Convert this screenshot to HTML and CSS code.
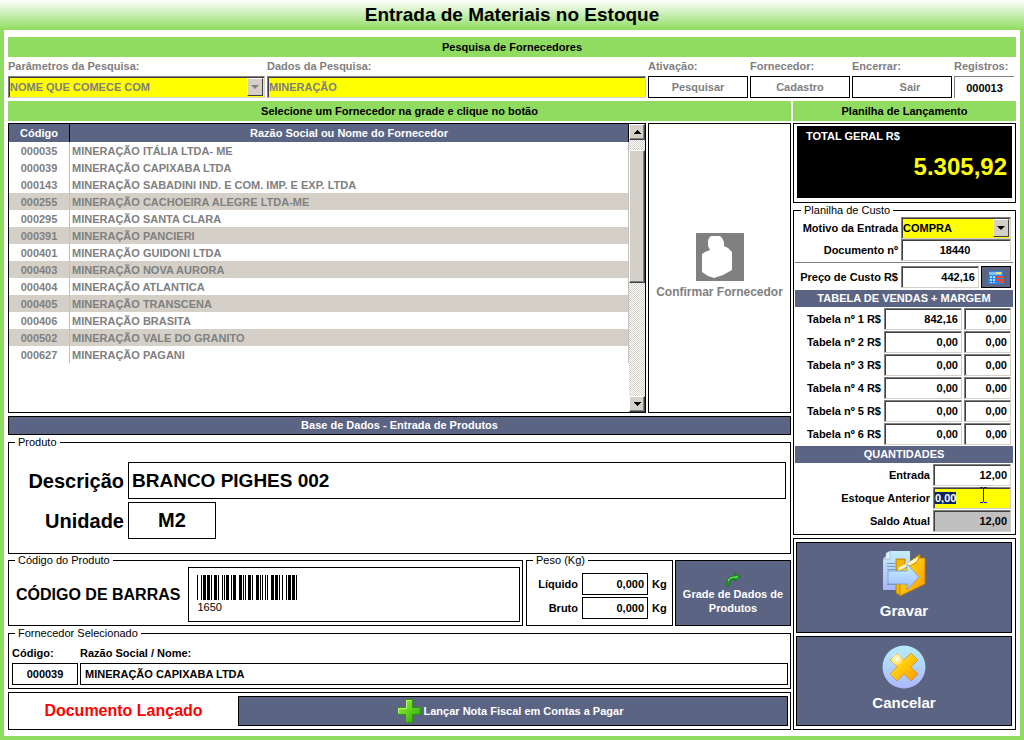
FILE: index.html
```html
<!DOCTYPE html>
<html lang="pt-BR">
<head>
<meta charset="utf-8">
<title>Entrada de Materiais no Estoque</title>
<link rel="stylesheet" href="styles.css">
</head>
<body>
<div class="window">
  <h1 class="title">Entrada de Materiais no Estoque</h1>
  <main class="content">
    <h2 class="bar">Pesquisa de Fornecedores</h2>
    <div class="search">
      <div class="search-cell">
        <label for="param">Parâmetros da Pesquisa:</label>
        <span class="combo combo-off">
          <select id="param" class="sunken yellow" disabled><option>NOME QUE COMECE COM</option></select>
          <span class="combo-arrow"></span>
        </span>
      </div>
      <div class="search-cell">
        <label for="dados">Dados da Pesquisa:</label>
        <input id="dados" class="sunken yellow" type="text" value="MINERAÇÃO" disabled>
      </div>
      <div class="search-cell">
        <label for="pesquisar">Ativação:</label>
        <button id="pesquisar" class="flat" disabled>Pesquisar</button>
      </div>
      <div class="search-cell">
        <label for="cadastro">Fornecedor:</label>
        <button id="cadastro" class="flat" disabled>Cadastro</button>
      </div>
      <div class="search-cell">
        <label for="sair">Encerrar:</label>
        <button id="sair" class="flat flat-exit" disabled>Sair</button>
      </div>
      <div class="search-cell">
        <label for="registros">Registros:</label>
        <input id="registros" class="count" type="text" value="000013" readonly>
      </div>
    </div>

    <div class="columns">
      <section class="left">
        <h2 class="bar">Selecione um Fornecedor na grade e clique no botão</h2>
        <div class="picker">
          <div class="grid-box">
            <div class="grid-view">
              <table class="grid">
                <thead><tr><th class="code">Código</th><th>Razão Social ou Nome do Fornecedor</th></tr></thead>
                <tbody>
                  <tr><td>000035</td><td>MINERAÇÃO ITÁLIA LTDA- ME</td></tr>
                  <tr><td>000039</td><td>MINERAÇÃO CAPIXABA LTDA</td></tr>
                  <tr><td>000143</td><td>MINERAÇÃO SABADINI IND. E COM. IMP. E EXP. LTDA</td></tr>
                  <tr class="alt"><td>000255</td><td>MINERAÇÃO CACHOEIRA ALEGRE LTDA-ME</td></tr>
                  <tr><td>000295</td><td>MINERAÇÃO SANTA CLARA</td></tr>
                  <tr class="alt"><td>000391</td><td>MINERAÇÃO PANCIERI</td></tr>
                  <tr><td>000401</td><td>MINERAÇÃO GUIDONI LTDA</td></tr>
                  <tr class="alt"><td>000403</td><td>MINERAÇÃO NOVA AURORA</td></tr>
                  <tr><td>000404</td><td>MINERAÇÃO ATLANTICA</td></tr>
                  <tr class="alt"><td>000405</td><td>MINERAÇÃO TRANSCENA</td></tr>
                  <tr><td>000406</td><td>MINERAÇÃO BRASITA</td></tr>
                  <tr class="alt"><td>000502</td><td>MINERAÇÃO VALE DO GRANITO</td></tr>
                  <tr><td>000627</td><td>MINERAÇÃO PAGANI</td></tr>
                </tbody>
              </table>
            </div>
            <div class="scroll">
              <button class="scroll-btn" aria-label="Rolar para cima"><svg width="7" height="4" viewBox="0 0 7 4" shape-rendering="crispEdges"><path d="M3 0h1v1h1v1h1v1h1v1H0V3h1V2h1V1h1z"/></svg></button>
              <div class="scroll-track"><div class="scroll-thumb"></div></div>
              <button class="scroll-btn" aria-label="Rolar para baixo"><svg width="7" height="4" viewBox="0 0 7 4" shape-rendering="crispEdges"><path d="M0 0h7v1H6v1H5v1H4v1H3V3H2V2H1V1H0z"/></svg></button>
            </div>
          </div>
          <button class="confirm" disabled>
            <svg width="48" height="48" viewBox="0 0 48 48"><path fill="#808080" d="M0 0h48v48H0z"/><path fill="#fff" d="M15 3h9l2 2 2 4v4l4 2 4 4v18l-9 5-9 3-6-2-6-4V21l3-2 5-2-1-2-1-2V8l1-3z"/></svg>
            <span>Confirmar Fornecedor</span>
          </button>
        </div>

        <h2 class="slate-bar base">Base de Dados - Entrada de Produtos</h2>

        <fieldset class="group product">
          <legend>Produto</legend>
          <label for="desc">Descrição</label>
          <input id="desc" class="line-box desc" type="text" value="BRANCO PIGHES 002">
          <label for="unid">Unidade</label>
          <input id="unid" class="line-box unit" type="text" value="M2">
        </fieldset>

        <div class="code-row">
          <fieldset class="group barcode">
            <legend>Código do Produto</legend>
            <span class="barcode-label">CÓDIGO DE BARRAS</span>
            <div class="barcode-box">
              <svg width="100" height="25" viewBox="0 0 100 25" shape-rendering="crispEdges"><path d="M0 0h1v25h-1zM4 0h1v25h-1zM6 0h3v25h-3zM10 0h3v25h-3zM14 0h1v25h-1zM17 0h3v25h-3zM21 0h1v25h-1zM25 0h1v25h-1zM27 0h1v25h-1zM29 0h3v25h-3zM34 0h1v25h-1zM36 0h3v25h-3zM42 0h3v25h-3zM46 0h1v25h-1zM48 0h1v25h-1zM51 0h3v25h-3zM55 0h1v25h-1zM59 0h3v25h-3zM63 0h1v25h-1zM65 0h1v25h-1zM68 0h1v25h-1zM70 0h1v25h-1zM74 0h3v25h-3zM78 0h3v25h-3zM82 0h1v25h-1zM85 0h1v25h-1zM89 0h1v25h-1zM91 0h3v25h-3zM95 0h3v25h-3zM99 0h1v25h-1z"/></svg>
              <span>1650</span>
            </div>
          </fieldset>
          <fieldset class="group weight">
            <legend>Peso (Kg)</legend>
            <label for="liq">Líquido</label><input id="liq" class="line-box" type="text" value="0,000"><span>Kg</span>
            <label for="bruto">Bruto</label><input id="bruto" class="line-box" type="text" value="0,000"><span>Kg</span>
          </fieldset>
          <button class="slate products">
            <svg width="15" height="15" viewBox="0 0 15 15"><path fill="#22b422" stroke="#0a6a0c" stroke-width=".8" d="M1 14C0 8 3 4 9 4V1l5 4-5 4V7C5 7 3 9 3 14z"/><path fill="none" stroke="#7fe86a" d="M2 9c1-3 3-4 7-4h3"/></svg>
            <span>Grade de Dados de Produtos</span>
          </button>
        </div>

        <fieldset class="group supplier">
          <legend>Fornecedor Selecionado</legend>
          <label for="fcod">Código:</label>
          <label for="fnome">Razão Social / Nome:</label>
          <input id="fcod" class="line-box center" type="text" value="000039">
          <input id="fnome" class="line-box" type="text" value="MINERAÇÃO CAPIXABA LTDA">
        </fieldset>

        <div class="status">
          <strong>Documento Lançado</strong>
          <button class="slate">
            <svg width="24" height="24" viewBox="0 0 24 24"><defs><linearGradient id="plus" x2="1" y2="1"><stop stop-color="#a4ee48"/><stop offset=".5" stop-color="#62d020"/><stop offset="1" stop-color="#2e9c08"/></linearGradient></defs><path fill="url(#plus)" stroke="#2a9410" d="M8.500.5h7v8h8v7h-8v8h-7v-8h-8v-7h8z"/><path fill="none" stroke="#b8f56c" d="M1.500 14V9.500h8v-8H14"/></svg>
            <span>Lançar Nota Fiscal em Contas a Pagar</span>
          </button>
        </div>
      </section>

      <section class="right">
        <h2 class="bar">Planilha de Lançamento</h2>
        <div class="total"><div class="total-in"><span>TOTAL GERAL R$</span><output>5.305,92</output></div></div>

        <fieldset class="group cost">
          <legend>Planilha de Custo</legend>
          <div class="field head"><label for="motivo">Motivo da Entrada</label>
            <span class="combo w-l"><select id="motivo" class="sunken yellow"><option>COMPRA</option></select><span class="combo-arrow"></span></span></div>
          <div class="field head"><label for="doc">Documento nº</label><input id="doc" class="sunken w-l center" type="text" value="18440"></div>
          <div class="field price"><label for="preco">Preço de Custo R$</label><input id="preco" class="sunken w-m num" type="text" value="442,16">
            <button class="slate calc" aria-label="Calculadora"><svg width="16" height="13" viewBox="0 0 16 13" shape-rendering="crispEdges"><path fill="#2f86e0" d="M1 0h14l1 13H0z"/><path fill="#7cc0f6" d="M1 1h13v3H1z"/><path fill="#e8e070" d="M8 1h5v2H8z"/><path fill="#a9dcff" d="M2 5h2v2H2zM5 5h2v2H5zM2 8h2v2H2zM5 8h2v2H5zM2 11h2v1H2zM5 11h2v1H5z"/><path fill="#e04a3c" d="M8 5h3v2H8zM12 5h3v2h-3zM8 8h3v2H8zM12 8h3v4h-3z"/></svg></button></div>
          <h3 class="slate-bar">TABELA DE VENDAS + MARGEM</h3>
          <div class="field"><label for="t1">Tabela nº 1 R$</label><input id="t1" class="sunken w-m num" type="text" value="842,16"><input aria-label="Margem 1" class="sunken w-s num" type="text" value="0,00"></div>
          <div class="field"><label for="t2">Tabela nº 2 R$</label><input id="t2" class="sunken w-m num" type="text" value="0,00"><input aria-label="Margem 2" class="sunken w-s num" type="text" value="0,00"></div>
          <div class="field"><label for="t3">Tabela nº 3 R$</label><input id="t3" class="sunken w-m num" type="text" value="0,00"><input aria-label="Margem 3" class="sunken w-s num" type="text" value="0,00"></div>
          <div class="field"><label for="t4">Tabela nº 4 R$</label><input id="t4" class="sunken w-m num" type="text" value="0,00"><input aria-label="Margem 4" class="sunken w-s num" type="text" value="0,00"></div>
          <div class="field"><label for="t5">Tabela nº 5 R$</label><input id="t5" class="sunken w-m num" type="text" value="0,00"><input aria-label="Margem 5" class="sunken w-s num" type="text" value="0,00"></div>
          <div class="field"><label for="t6">Tabela nº 6 R$</label><input id="t6" class="sunken w-m num" type="text" value="0,00"><input aria-label="Margem 6" class="sunken w-s num" type="text" value="0,00"></div>
          <h3 class="slate-bar">QUANTIDADES</h3>
          <div class="field"><label for="ent">Entrada</label><input id="ent" class="sunken w-m num" type="text" value="12,00"></div>
          <div class="field"><label for="ant">Estoque Anterior</label><span class="edit w-m"><input id="ant" class="sunken yellow" type="text" value="0,00">
            <svg class="ibeam" width="7" height="16" viewBox="0 0 7 16" shape-rendering="crispEdges"><path fill="#222" d="M0 0h3v1H0zM4 0h3v1H4z"/><path fill="#00f" d="M3 1h1v14H3zM0 15h3v1H0zM4 15h3v1H4z"/></svg></span></div>
          <div class="field"><label for="saldo">Saldo Atual</label><input id="saldo" class="sunken gray w-m num" type="text" value="12,00" readonly></div>
        </fieldset>

        <div class="actions">
          <button class="slate">
            <svg width="44" height="46" viewBox="0 0 44 46">
              <defs>
                <linearGradient id="pg" x2="0" y2="1"><stop stop-color="#c4eefa"/><stop offset="1" stop-color="#a9b6fa"/></linearGradient>
                <linearGradient id="fo" x2="1" y2="1"><stop stop-color="#ffe21a"/><stop offset="1" stop-color="#ff9a00"/></linearGradient>
                <linearGradient id="ar" x2="0" y2="1"><stop stop-color="#c6f4ff"/><stop offset="1" stop-color="#a0b8fa"/></linearGradient>
              </defs>
              <path fill="url(#pg)" d="M8 0h20v39H1V8z"/>
              <path fill="#dff6ff" stroke="#88a8c4" stroke-width=".6" d="M1 8l3-2V2l4-2v8z"/>
              <path stroke="#7d98b8" d="M5 12.500h8M5 15.500h8M5 18.500h8M5 33.500h8"/>
              <path fill="#f2b606" stroke="#a97500" stroke-width=".8" d="M14 8h9v6L38 3v7L19 22v23l-5-3z"/>
              <path fill="#fff6cc" d="M16 17L36 6v4L18 21z"/>
              <path fill="url(#fo)" stroke="#c27a00" stroke-width=".8" d="M18 20l5-3 11-5 3-5h6v26L18 45z"/>
              <path fill="url(#ar)" stroke="#6f9ccc" stroke-width=".8" d="M6 20h19v-7l12 13-12 13v-6H6z"/>
            </svg>
            <span>Gravar</span>
          </button>
          <button class="slate">
            <svg width="44" height="44" viewBox="0 0 44 44">
              <defs>
                <linearGradient id="ci" x2="0" y2="1"><stop stop-color="#b6ecfc"/><stop offset="1" stop-color="#abb8fd"/></linearGradient>
                <linearGradient id="xx" x2="1" y2="1"><stop stop-color="#fff04a"/><stop offset=".45" stop-color="#ffcc0a"/><stop offset="1" stop-color="#ff9500"/></linearGradient>
                <radialGradient id="gl"><stop stop-color="#fff"/><stop offset="1" stop-color="#fff" stop-opacity="0"/></radialGradient>
              </defs>
              <circle cx="22" cy="22" r="21.500" fill="url(#ci)"/>
              <path fill="url(#xx)" stroke="#b98f4a" stroke-width=".7" d="M15 8l7 7 7-7 7 7-7 7 7 7-7 7-7-7-7 7-7-7 7-7-7-7z"/>
              <circle cx="15" cy="14" r="7" fill="url(#gl)"/>
            </svg>
            <span>Cancelar</span>
          </button>
        </div>
      </section>
    </div>
  </main>
</div>
<script>
  const field = document.getElementById("ant");
  field.focus();
  field.select();
</script>
</body>
</html>
```
FILE: styles.css
```css
* { box-sizing: border-box; }

body {
  margin: 0;
  background: #fff;
  color: #000;
  font: bold 11px/14px "Liberation Sans", Arial, sans-serif;
}

h1, h2, h3, fieldset { margin: 0; padding: 0; }

input, select, button {
  margin: 0;
  padding: 0;
  border-radius: 0;
  font: inherit;
  color: inherit;
  min-width: 0;
  outline: none;
}

svg { display: block; flex: none; }

.window {
  display: flex;
  flex-direction: column;
  min-height: 100vh;
  border: solid #8fdc60;
  border-width: 0 4px 4px;
}

.title {
  margin: 0 -4px;
  height: 30px;
  background: linear-gradient(#fff, #8fdc60);
  font-size: 19px;
  line-height: 30px;
  text-align: center;
}

.content { padding: 7px 4px 6px; }

.bar {
  background: #8fdc60;
  font-size: 11px;
  line-height: 20px;
  text-align: center;
}

.slate-bar {
  background: #5c6484;
  color: #fff;
  font-size: 11px;
  line-height: 17px;
  text-align: center;
}

/* search strip */
.search {
  display: grid;
  grid-template-columns: 257px 1fr 100px 100px 100px 62px;
  gap: 2px;
  padding: 2px 0 3px;
  color: #808080;
}

.search-cell { display: flex; flex-direction: column; gap: 3px; }
.search-cell label { white-space: nowrap; }
.search-cell input, .search-cell select, .search-cell button { height: 22px; }

.sunken {
  height: 22px;
  padding: 0 3px 0 1px;
  border: 1px solid;
  border-color: #808080 #d4d0c8 #d4d0c8 #808080;
  box-shadow: inset 1px 1px #404040;
  background: #fff;
}

.yellow { background: #ff0; }
.gray { background: #c0c0c0; }
.center { text-align: center; }
.num { text-align: right; }

.combo { position: relative; display: flex; }
.combo select { flex: 1; appearance: none; opacity: 1; }
.combo-off select { color: #808080; }

.combo-arrow {
  position: absolute;
  top: 2px;
  right: 2px;
  bottom: 2px;
  width: 16px;
  display: grid;
  place-items: center;
  border: 1px solid;
  border-color: #fff #404040 #404040 #fff;
  background: #d4d0c8;
  pointer-events: none;
}

.combo-arrow::after {
  content: "";
  border: solid transparent;
  border-width: 4px 4px 0;
  border-top-color: #000;
}

.combo-off .combo-arrow::after { border-top-color: #808080; }

.flat { border: 1px solid #000; background: #fff; color: #808080; }
.flat-exit { padding-left: 16px; }

.count {
  margin-right: 2px;
  border: solid #808080;
  border-width: 1px 0 0 1px;
  background: #fff;
  color: #000;
  text-align: center;
}

/* two-column area */
.columns {
  display: grid;
  grid-template-columns: minmax(0, 1fr) 223px;
  gap: 2px;
}

.left, .right { display: flex; flex-direction: column; }

.picker {
  display: grid;
  grid-template-columns: minmax(0, 1fr) 143px;
  gap: 2px;
  min-height: 290px;
  margin-top: 2px;
}

.grid-box { display: flex; border: 1px solid #000; }
.grid-view { flex: 1; }

.grid {
  width: 100%;
  border-collapse: separate;
  border-spacing: 0;
  color: #808080;
}

.grid th {
  height: 18px;
  padding: 0;
  background: #5c6484;
  color: #fff;
  border-right: 1px solid #000;
}

.grid .code { width: 61px; }

.grid td {
  height: 17px;
  padding: 1px 2px 0;
  border-right: 1px solid #c0c0c0;
  line-height: 16px;
}

.grid td:first-child { text-align: center; }
.alt { background: #d4d0c8; }

.scroll { display: flex; flex-direction: column; width: 16px; }

.scroll-btn, .scroll-thumb {
  border: 1px solid;
  border-color: #fff #404040 #404040 #fff;
  box-shadow: inset -1px -1px #808080;
  background: #d4d0c8;
}

.scroll-btn { display: grid; place-items: center; height: 16px; }

.scroll-track {
  flex: 1;
  padding-top: 10px;
  background: repeating-conic-gradient(#d4d0c8 0 25%, #fff 0 50%) 0 0 / 2px 2px;
}

.scroll-thumb { height: 133px; }

.confirm {
  display: flex;
  flex-direction: column;
  align-items: center;
  justify-content: center;
  gap: 4px;
  padding-bottom: 4px;
  border: 1px solid #000;
  background: #fff;
  color: #808080;
  font-size: 12px;
}

.base { margin-top: 3px; border: 1px solid #000; }

/* framed groups */
.group { border: 1px solid #000; min-width: 0; }

.group legend {
  margin-left: 6px;
  padding: 0 3px;
  font-size: 11px;
  font-weight: normal;
  line-height: 13px;
}

.line-box { border: 1px solid #000; background: #fff; padding: 0 4px; }

.product {
  display: grid;
  grid-template-columns: 115px minmax(0, 1fr);
  gap: 3px 4px;
  align-items: center;
  margin-top: 1px;
  padding: 13px 4px 14px 0;
  font-size: 20px;
  line-height: 24px;
}

.product label { text-align: right; }
.product .line-box { height: 37px; padding: 0 3px; }
.product .desc { font-size: 19px; }
.product .unit { width: 88px; text-align: center; }

.code-row {
  display: grid;
  grid-template-columns: minmax(0, 1fr) 147px 116px;
  column-gap: 2px;
}

.barcode {
  display: flex;
  align-items: center;
  gap: 8px;
  margin-right: 1px;
  padding: 0 2px 3px 0;
}

.barcode-label {
  padding-left: 7px;
  font-size: 16px;
  line-height: 20px;
  white-space: nowrap;
}

.barcode-box {
  flex: 1;
  height: 55px;
  padding: 7px 8px;
  border: 1px solid #000;
  font-weight: normal;
  line-height: 14px;
}

.weight {
  display: grid;
  grid-template-columns: 51px 66px auto;
  gap: 2px 4px;
  align-items: center;
  padding: 6px 0;
}

.weight label { text-align: right; }
.weight .line-box { height: 22px; text-align: right; padding: 0 3px; }

.slate {
  display: flex;
  align-items: center;
  justify-content: center;
  border: 1px solid #000;
  background: #5c6484;
  color: #fff;
}

.products { flex-direction: column; margin-top: 6px; }

.supplier {
  display: grid;
  grid-template-columns: 66px minmax(0, 1fr);
  gap: 3px 2px;
  margin-top: 1px;
  padding: 6px 2px 3px 3px;
}

.supplier legend { margin-left: 3px; }
.supplier .line-box { height: 22px; }

.status {
  display: grid;
  grid-template-columns: 225px minmax(0, 1fr);
  gap: 2px;
  margin-top: 3px;
  padding: 3px 2px;
  border: 1px solid #000;
}

.status strong {
  color: #f00;
  font-size: 16px;
  line-height: 30px;
  text-align: center;
}

.status .slate { gap: 3px; padding-right: 6px; }

/* right column */
.total {
  margin-top: 2px;
  padding: 2px 3px 4px;
  border: 1px solid #000;
}

.total-in {
  display: flex;
  flex-direction: column;
  gap: 10px;
  min-height: 72px;
  padding: 3px 5px 0 9px;
  background: #000;
  color: #fff;
}

.total output {
  color: #ff0;
  font-size: 24px;
  line-height: 28px;
  text-align: right;
}

.cost {
  display: flex;
  flex-direction: column;
  margin-top: 1px;
  padding: 0 2px 1px 1px;
}

.cost .slate-bar { margin-bottom: 1px; }

.field {
  display: flex;
  align-items: center;
  justify-content: flex-end;
  gap: 2px;
  min-height: 22px;
  margin-bottom: 1px;
  padding-right: 2px;
}

.head { margin-bottom: 0; }

.field label { flex: 1; text-align: right; white-space: nowrap; padding-right: 1px; }
.w-l { width: 110px; }
.w-m { width: 78px; }
.w-s { width: 47px; }

.price {
  margin: 1px 0 2px;
  padding-top: 3px;
  border-top: 1px solid #808080;
}

.calc { width: 30px; height: 22px; }

.edit { position: relative; display: flex; }
.edit input { width: 100%; }
.edit input::selection { background: #0a246a; color: #fff; }

.ibeam { position: absolute; top: 0; left: 47px; pointer-events: none; }

.actions {
  display: flex;
  flex: 1;
  flex-direction: column;
  gap: 3px;
  margin-top: 3px;
  padding: 3px 3px 3px 2px;
  border: 1px solid #000;
}

.actions .slate {
  flex: 1;
  flex-direction: column;
  gap: 5px;
  padding-bottom: 4px;
  font-size: 15px;
  line-height: 18px;
}
```
